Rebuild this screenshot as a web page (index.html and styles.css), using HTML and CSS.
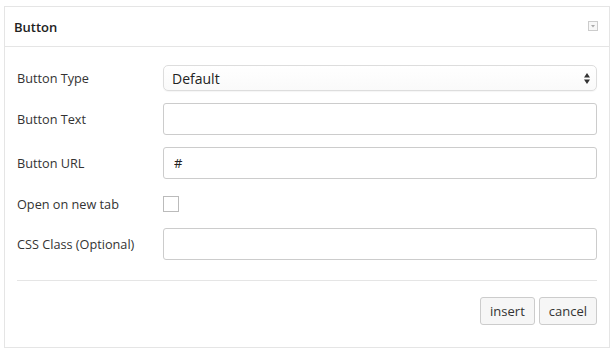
FILE: index.html
```html
<!DOCTYPE html>
<html lang="en">
<head>
    <meta charset="UTF-8">
    <meta name="viewport" content="width=device-width, initial-scale=1.0">
    <title>Button</title>
    <link rel="stylesheet" href="styles.css">
</head>
<body>
    <div class="panel">
        <div class="panel-header">
            <h3>Button</h3>
            <span class="toggle">
                <svg width="10" height="10" viewBox="0 0 10 10">
                    <rect x="0.5" y="0.5" width="9" height="9" fill="#f7f7f7" stroke="#ccc"/>
                    <path d="M3 4 L7 4 L5 6.5 Z" fill="#aaa"/>
                </svg>
            </span>
        </div>

        <div class="panel-body">
            <div class="form-row row-select">
                <label for="button-type">Button Type</label>
                <div class="select-wrap">
                    <select id="button-type">
                        <option>Default</option>
                        <option>Primary</option>
                    </select>
                    <svg class="arrows" width="6" height="11" viewBox="0 0 6 11">
                        <path d="M0 4.5 L3 0 L6 4.5 Z M0 6.5 L6 6.5 L3 11 Z" fill="#333"/>
                    </svg>
                </div>
            </div>

            <div class="form-row">
                <label for="button-text">Button Text</label>
                <input type="text" id="button-text">
            </div>

            <div class="form-row">
                <label for="button-url">Button URL</label>
                <input type="text" id="button-url" value="#">
            </div>

            <div class="form-row row-check">
                <label for="new-tab">Open on new tab</label>
                <input type="checkbox" id="new-tab">
            </div>

            <div class="form-row">
                <label for="css-class">CSS Class (Optional)</label>
                <input type="text" id="css-class">
            </div>

            <div class="panel-footer">
                <button>insert</button>
                <button>cancel</button>
            </div>
        </div>
    </div>
</body>
</html>
```

FILE: styles.css
```css
body {
    margin: 0;
    padding: 6px 0 0 4px;
    font-family: "Open Sans", Arial, sans-serif;
    font-size: 13px;
    color: #333;
    background: #fff;
}
.panel {
    width: 604px;
    border: 1px solid #e5e5e5;
    background: #fff;
}
.panel-header {
    height: 39px;
    border-bottom: 1px solid #e5e5e5;
    display: flex;
    justify-content: space-between;
    align-items: flex-start;
    padding: 0 11px 0 9px;
}
.panel-header h3 {
    margin: 0;
    font-size: 13px;
    font-weight: 600;
    color: #222;
    line-height: 40px;
}
.toggle {
    margin-top: 10px;
    display: block;
    height: 10px;
}
.panel-body {
    padding: 18px 12px 22px 12px;
}
.form-row {
    display: grid;
    grid-template-columns: 146px 1fr;
    align-items: center;
    margin-bottom: 12px;
}
.form-row label {
    color: #333;
    font-size: 12.7px;
    line-height: 16px;
}
.select-wrap {
    position: relative;
    height: 26px;
}
select {
    width: 100%;
    height: 26px;
    border: 1px solid #ddd;
    border-radius: 5px;
    background: linear-gradient(#fff, #fafafa);
    font-family: inherit;
    font-size: 14px;
    color: #222;
    padding: 0 0 0 8px;
    appearance: none;
    -webkit-appearance: none;
    box-shadow: 0 1px 1px rgba(0, 0, 0, 0.04);
    display: block;
}
.arrows {
    position: absolute;
    right: 7px;
    top: 8px;
}
input[type="text"] {
    height: 32px;
    box-sizing: border-box;
    border: 1px solid #ccc;
    border-radius: 3px;
    font-family: inherit;
    font-size: 13px;
    color: #222;
    padding: 0 10px;
    margin: 0;
    display: block;
}
.row-check {
    margin: 17px 0 16px;
    height: 16px;
}
input[type="checkbox"] {
    appearance: none;
    -webkit-appearance: none;
    width: 16px;
    height: 16px;
    border: 1px solid #bbb;
    margin: 0;
    background: #fff;
    display: block;
}
.panel-footer {
    border-top: 1px solid #e5e5e5;
    margin-top: 20px;
    padding-top: 16px;
    display: flex;
    justify-content: flex-end;
    gap: 4px;
}
.panel-footer button {
    height: 28px;
    padding: 0 9px;
    font-family: inherit;
    font-size: 13px;
    color: #333;
    background: #f6f6f6;
    border: 1px solid #ccc;
    border-radius: 3px;
}
```
